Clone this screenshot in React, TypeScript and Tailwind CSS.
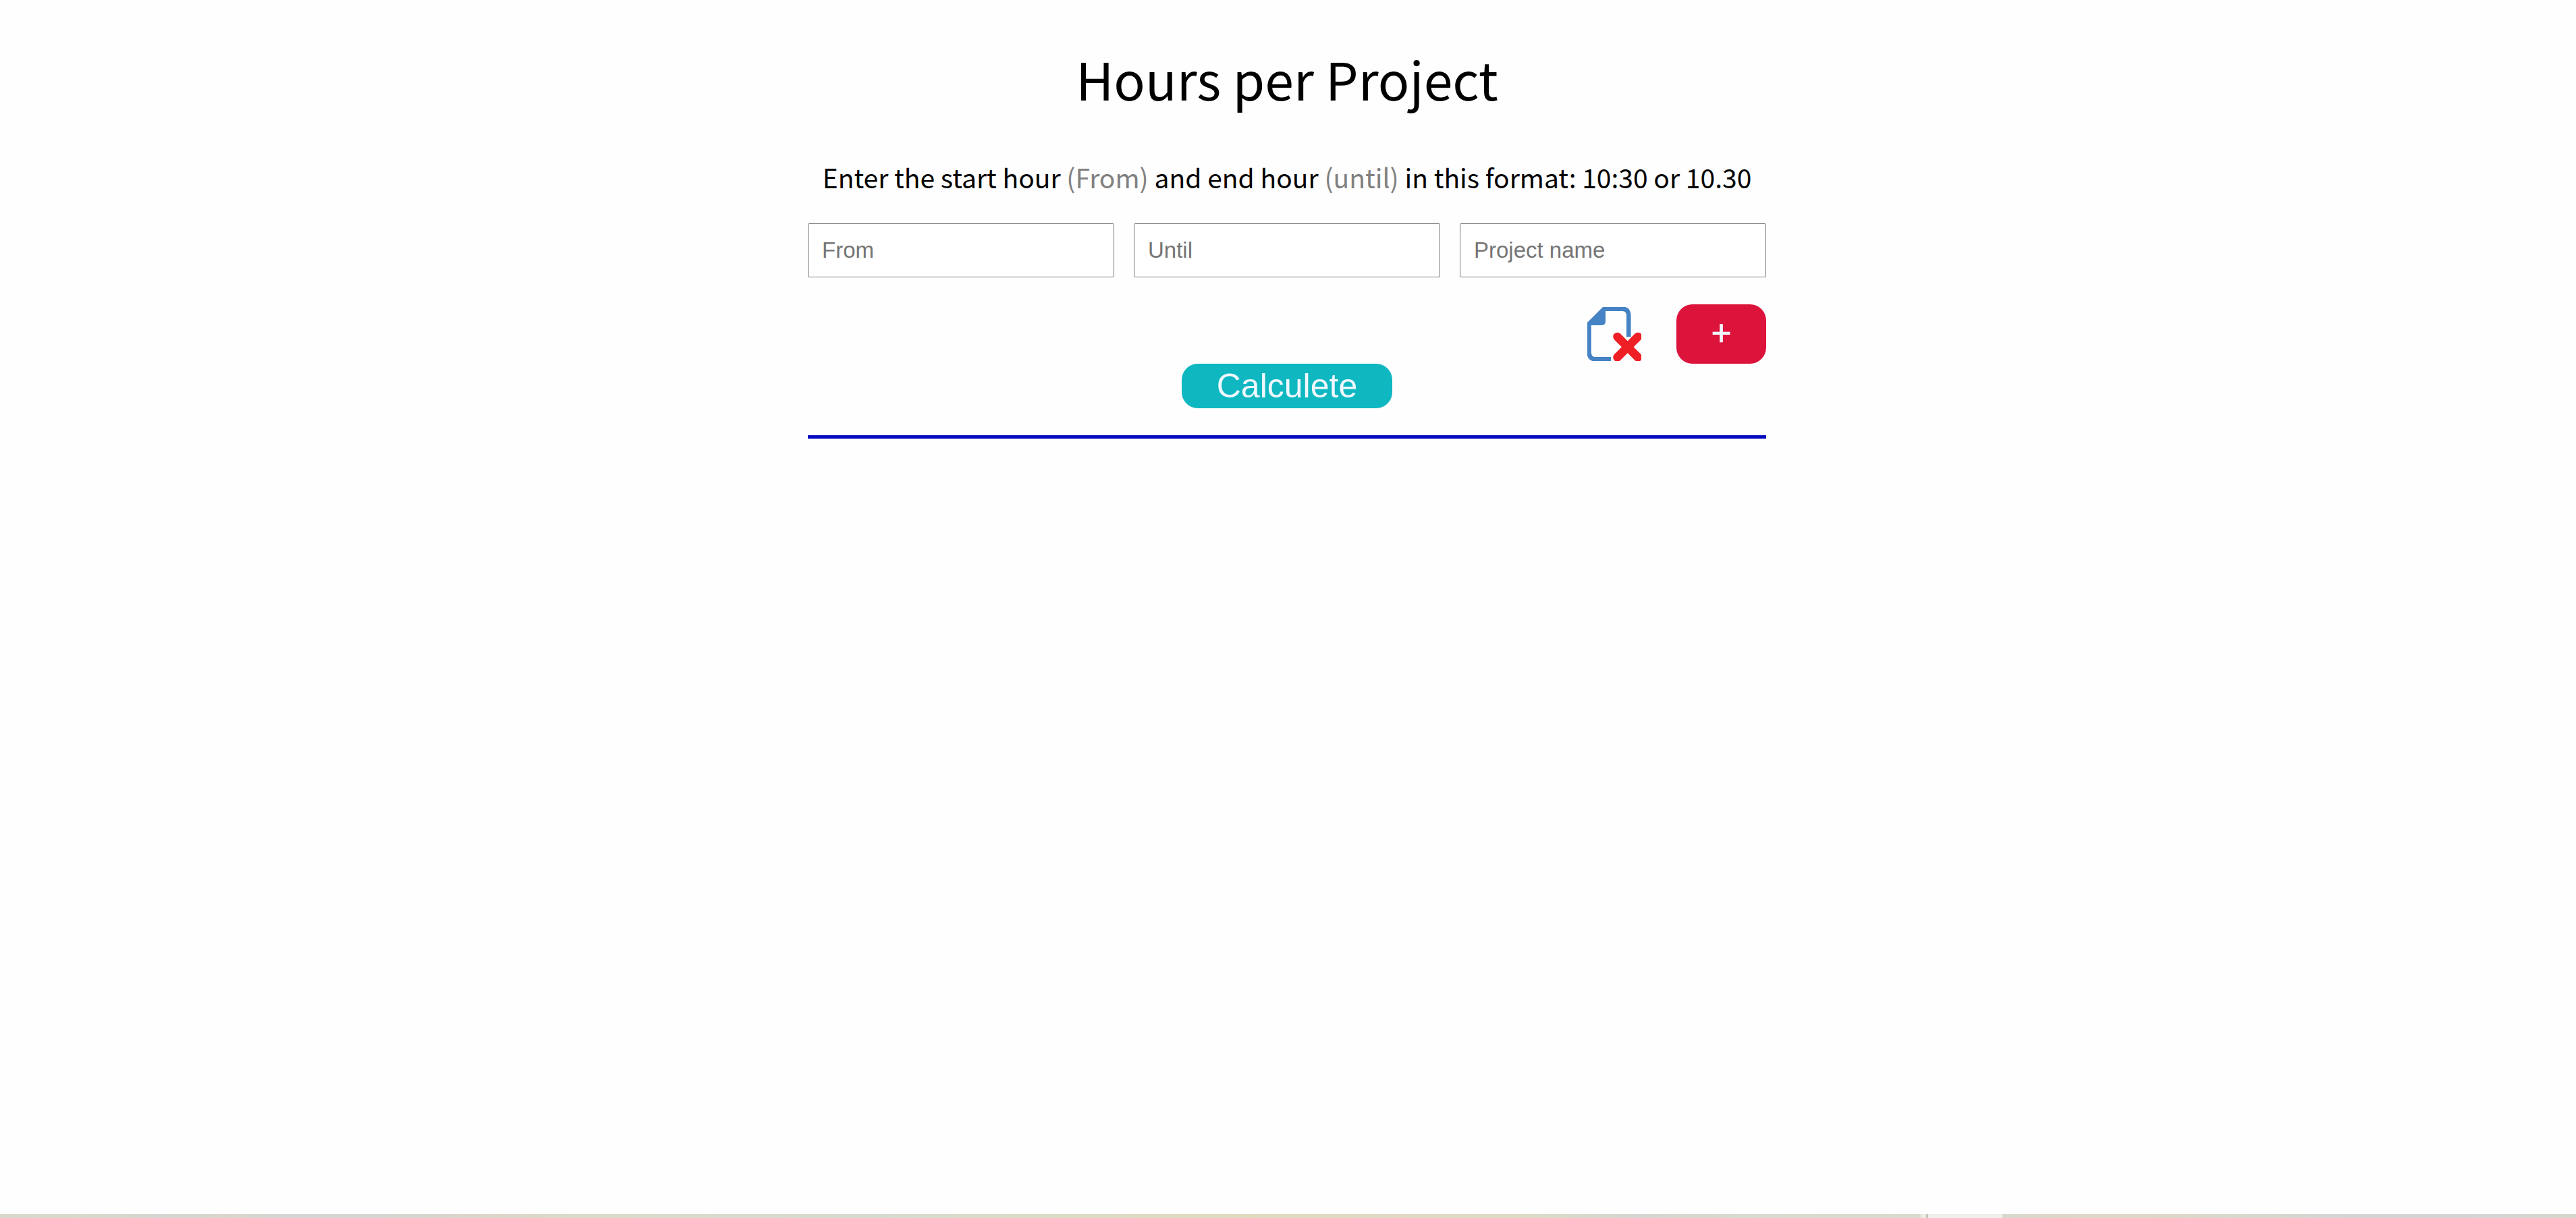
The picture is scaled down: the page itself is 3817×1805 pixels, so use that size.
function Field({ label }: { label: string }) {
  return (
    <input
      type="text"
      aria-label={label}
      placeholder={label}
      className="h-20 w-full min-w-0 flex-1 rounded-xs border border-[#767676] bg-white px-5 font-['Liberation_Sans',sans-serif] text-[33px] text-black placeholder:text-[#757575]"
    />
  );
}

function ClearIcon() {
  return (
    <svg viewBox="0 0 80 80" className="size-20" aria-hidden="true">
      <path d="M24 2.800H52Q61.300 2.800 61.300 13V44" fill="none" stroke="#4583c4" strokeWidth="6.600" />
      <path d="M2.600 24V67Q3 77.300 12 77.300H35" fill="none" stroke="#4583c4" strokeWidth="6.400" />
      <path d="M23 0H27V21Q27 27 21 27H0V23Z" fill="#4583c4" />
      <path d="M44.500 44L75 74.500M75 44L44.500 74.500" stroke="#ee1f25" strokeWidth="12.500" strokeLinecap="round" />
    </svg>
  );
}

export default function App() {
  return (
    <div className="flex min-h-screen flex-col bg-[#fefefe] font-['Noto_Sans_CJK_JP','Noto_Sans',sans-serif] text-black">
      <main className="mx-auto w-full max-w-[1423px] grow pt-14 pr-[3px]">
        <h1 className="text-center text-[77px] leading-[120px]">Hours per Project</h1>
        <p className="mt-14 text-center text-[39px] leading-[60px]">
          Enter the start hour <span className="text-[#808080]">(From)</span> and end hour{" "}
          <span className="text-[#808080]">(until)</span> in this format: 10:30 or 10.30
        </p>
        <form className="mt-[39px]" onSubmit={(e) => e.preventDefault()}>
          <div className="flex gap-[29px]">
            <Field label="From" />
            <Field label="Until" />
            <Field label="Project name" />
          </div>
          <div className="mt-10 flex items-center justify-end gap-[52px]">
            <button type="button" aria-label="Clear">
              <ClearIcon />
            </button>
            <button
              type="button"
              className="h-[88px] w-[133px] rounded-3xl bg-[#dc143c] pb-2 text-[52px] font-medium leading-none text-[#f0f8ff]"
            >
              +
            </button>
          </div>
          <button
            type="submit"
            className="mx-auto block h-[66px] rounded-3xl bg-[#0fb7c0] px-[52px] font-['Liberation_Sans',sans-serif] text-[50px] leading-none text-[#f0f8ff]"
          >
            Calculete
          </button>
        </form>
        <hr className="mt-10 h-[5px] border-0 bg-[#0509bf]" />
      </main>
      <div className="flex h-1.5">
        <div className="flex-[2846] bg-[linear-gradient(to_right,#dad8cd_0%,#d9dacb_4%,#d6d6d2_8%,#dad6cf_12%,#d6d6d4_15%,#d8d6d1_22%,#ddd5ca_25%,#dadbcb_30%,#d6dbcf_46%,#dadcc8_53%,#e1dcc0_65%,#e1d9c5_73%,#dddcc6_79%,#d6d6d2_85%,#d8dbcf_91%,#dadacd_100%)]" />
        <div className="flex-[8] bg-[#ecebe6]" />
        <div className="flex-[3] bg-[#c9c5bf]" />
        <div className="flex-[110] bg-[#f0efeb]" />
        <div className="flex-[850] bg-[linear-gradient(to_right,#d9d9cd_0%,#dfd7c9_12%,#dfd7c9_25%,#d9d9cd_40%,#d5d5d5_60%,#d5d5d5_80%,#d7d7cf_100%)]" />
      </div>
    </div>
  );
}
